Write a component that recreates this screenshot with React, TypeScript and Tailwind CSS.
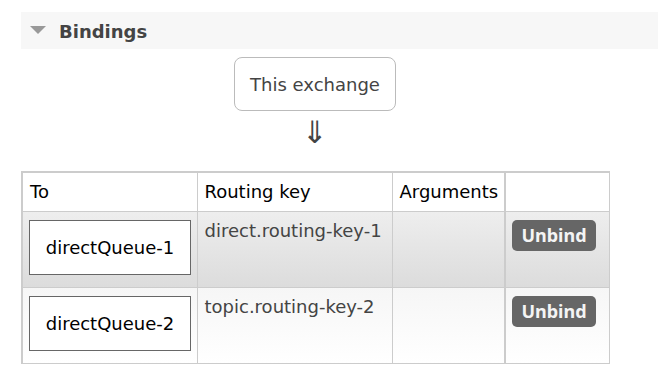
const rows = [
  { queue: "directQueue-1", key: "direct.routing-key-1", bg: "bg-gradient-to-b from-[#eeeeee] to-[#dcdcdc]" },
  { queue: "directQueue-2", key: "topic.routing-key-2", bg: "bg-gradient-to-b from-[#f6f6f6] to-[#ffffff]" },
]

export default function App() {
  return (
    <div className="min-h-[387px] w-[658px] bg-white pt-3 text-[18px] text-[#333]" style={{ fontFamily: '"DejaVu Sans", Verdana, sans-serif' }}>
      <div className="ml-[21px] flex h-[37px] items-center bg-[#f7f7f7]">
        <svg width="16" height="9" viewBox="0 0 16 9" className="ml-[9px]">
          <polygon points="0,0 16,0 8,8" fill="#999" />
        </svg>
        <span className="ml-[13px] pt-[1px] text-[18px] font-bold text-[#444]">Bindings</span>
      </div>

      <div className="ml-[21px] w-[588px]">
        <div className="flex flex-col items-center">
          <div className="mt-[8px] flex h-[54px] w-[162px] items-center justify-center rounded-[8px] border border-[#bbb] text-[#444]">
            This exchange
          </div>
          <div className="mt-[6px] h-[30px] text-[31px] leading-[30px] text-[#444]">⇓</div>
        </div>

        <table className="mt-[24px] w-[588px] table-fixed border-collapse border-l-2 border-t-2 border-[#ccc]">
          <colgroup>
            <col className="w-[175px]" />
            <col className="w-[195px]" />
            <col className="w-[113px]" />
            <col className="w-[104px]" />
          </colgroup>
          <thead>
            <tr className="h-[39px] bg-white text-black">
              <th className="border border-[#ccc] px-[7px] text-left font-normal">To</th>
              <th className="border border-[#ccc] px-[7px] text-left font-normal">Routing key</th>
              <th className="border border-[#ccc] border-r-2 px-[7px] text-left font-normal">Arguments</th>
              <th className="border border-[#ccc]"></th>
            </tr>
          </thead>
          <tbody>
            {rows.map((r) => (
              <tr key={r.queue} className={`h-[76px] ${r.bg}`}>
                <td className="border border-[#ccc] px-[6px] pt-[8px] pb-[12px] align-top">
                  <div className="flex h-[55px] w-[162px] items-center justify-center border border-[#666] bg-white text-black">
                    {r.queue}
                  </div>
                </td>
                <td className="border border-[#ccc] px-[7px] pt-[8px] align-top leading-[22px] text-[#444]">{r.key}</td>
                <td className="border border-[#ccc] border-r-2"></td>
                <td className="border border-[#ccc] px-[6px] pt-[8px] align-top">
                  <button
                    className="flex h-[31px] w-[84px] items-center justify-center rounded-[5px] bg-[#666] text-[18px] font-bold leading-none text-[#f4f4f4]"
                    style={{ fontFamily: '"Noto Sans", "DejaVu Sans", sans-serif' }}
                  >
                    Unbind
                  </button>
                </td>
              </tr>
            ))}
          </tbody>
        </table>
      </div>
    </div>
  )
}
